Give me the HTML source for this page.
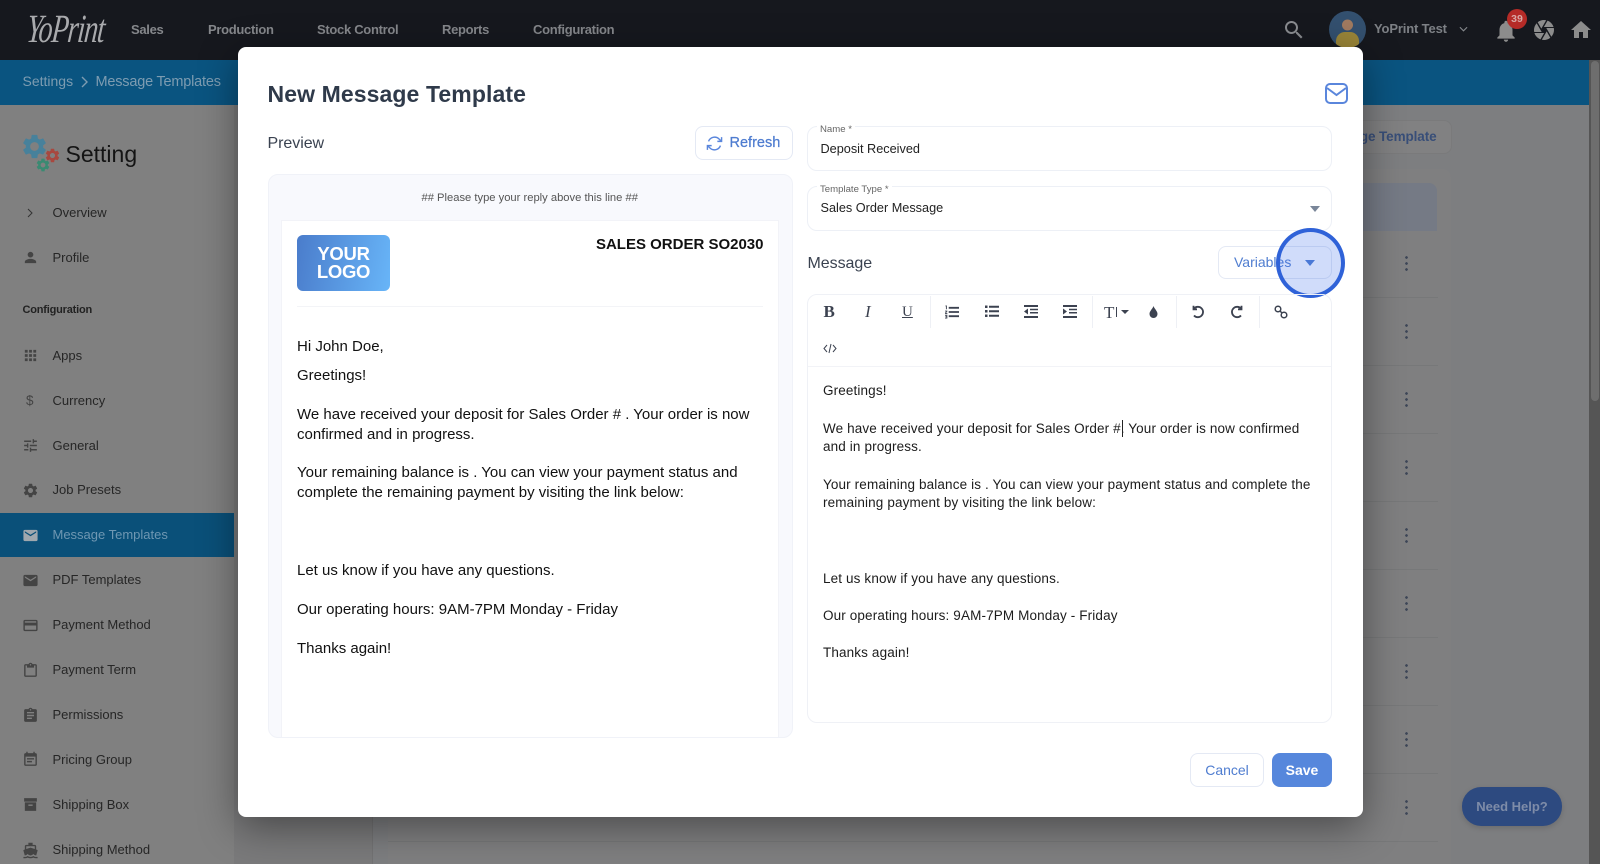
<!DOCTYPE html>
<html><head><meta charset="utf-8"><title>New Message Template</title>
<style>
html,body{margin:0;padding:0;width:1600px;height:864px;overflow:hidden;background:#7d7e80;font-family:"Liberation Sans",sans-serif}
.a{position:absolute}
.t{position:absolute;white-space:nowrap;line-height:20px}
.side{font-size:13px;color:#262626;left:52.5px;margin-top:1px}
.ico{position:absolute;left:21.5px;width:17px;height:17px;fill:#444;margin-top:1px}
.nav{font-size:13px;color:#85878b;font-weight:bold;top:20px;letter-spacing:-.3px}
.pv{font-size:15px;color:#111;left:297px;margin-top:1px}
.ed{font-size:13.5px;color:#1c1c1c;left:823px;letter-spacing:.13px}
.dot{position:absolute;left:1404.5px;width:3px;height:15px;background:radial-gradient(circle at 1.5px 1.5px,#3d4657 1.2px,transparent 1.5px) 0 0/3px 6px}
.sep{position:absolute;left:388px;width:1050px;height:1px;background:#777879}
.vs{position:absolute;top:296px;height:32px;width:1px;background:#eef0f5}
.tb{position:absolute;fill:#3c4250}
</style></head><body>

<!-- background page -->
<div class="a" style="left:0;top:0;width:1600px;height:60px;background:#16181e"></div>
<div class="a" style="left:0;top:60px;width:1589px;height:45px;background:#0a5480"></div>
<div class="a" style="left:0;top:105px;width:234px;height:759px;background:#808080"></div>
<div class="a" style="left:234px;top:105px;width:138px;height:759px;background:#7a7a7b"></div>
<div class="a" style="left:372px;top:105px;width:1px;height:759px;background:#737374"></div>
<div class="a" style="left:388px;top:169px;width:1063px;height:695px;background:#7f7f80;border-radius:8px 8px 0 0"></div>
<div class="a" style="left:1589px;top:60px;width:11px;height:804px;background:#555"></div>
<div class="a" style="left:1591px;top:61px;width:8px;height:340px;background:#6e6e6e;border-radius:4px"></div>

<!-- logo -->
<div class="t" style="left:27px;top:9px;font:italic 40px/40px 'Liberation Serif',serif;color:#a9aaad;letter-spacing:-1.5px;transform:scaleX(.7) skewX(-8deg);transform-origin:left">YoPrint</div>

<div class="t nav" style="left:131px">Sales</div>
<div class="t nav" style="left:208px">Production</div>
<div class="t nav" style="left:317px">Stock Control</div>
<div class="t nav" style="left:442px">Reports</div>
<div class="t nav" style="left:533px">Configuration</div>

<svg class="a" style="left:1282px;top:18px" width="24" height="24" viewBox="0 0 24 24" fill="#8a8c90"><path d="M15.5 14h-.79l-.28-.27C15.41 12.59 16 11.11 16 9.5 16 5.91 13.09 3 9.5 3S3 5.91 3 9.5 5.91 16 9.5 16c1.61 0 3.09-.59 4.23-1.57l.27.28v.79l5 4.99L20.49 19l-4.99-5zm-6 0C7.01 14 5 11.99 5 9.5S7.01 5 9.5 5 14 7.01 14 9.5 11.99 14 9.5 14z"/></svg>
<svg class="a" style="left:1329px;top:11px" width="37" height="37" viewBox="0 0 37 37"><defs><clipPath id="c"><circle cx="18.5" cy="18.5" r="18.5"/></clipPath></defs><circle cx="18.5" cy="18.5" r="18.5" fill="#33506f"/><g clip-path="url(#c)"><circle cx="18.5" cy="14" r="5.5" fill="#a07a60"/><rect x="7" y="21" width="23" height="20" rx="9" fill="#9a8538"/></g></svg>
<div class="t" style="left:1374px;top:19px;font-size:13px;font-weight:bold;color:#7d8085;letter-spacing:-.15px">YoPrint Test</div>
<svg class="a" style="left:1459px;top:25px" width="9" height="8" viewBox="0 0 10 8"><path d="M1 2l4 4 4-4" fill="none" stroke="#85888c" stroke-width="1.2"/></svg>
<svg class="a" style="left:1493px;top:18px" width="26" height="26" viewBox="0 0 24 24" fill="#8c8c8c"><path d="M12 22c1.1 0 2-.9 2-2h-4c0 1.1.89 2 2 2zm6-6v-5c0-3.07-1.64-5.64-4.5-6.32V4c0-.83-.67-1.5-1.5-1.5s-1.5.67-1.5 1.5v.68C7.63 5.36 6 7.92 6 11v5l-2 2v1h16v-1l-2-2z"/></svg>
<div class="a" style="left:1507px;top:9px;width:20px;height:20px;border-radius:50%;background:#b52b27;color:#d9a8a5;font-size:10.5px;font-weight:bold;line-height:20px;text-align:center">39</div>
<svg class="a" style="left:1532px;top:18px" width="24" height="24" viewBox="0 0 24 24" fill="#8c8c8c"><path d="M9.4 10.5l4.77-8.26C13.47 2.09 12.75 2 12 2c-2.4 0-4.6.85-6.32 2.25l3.66 6.35.06-.1zM21.54 9c-.92-2.92-3.15-5.26-6-6.34L11.88 9h9.66zm.26 1h-7.49l.29.5 4.76 8.25C21 16.97 22 14.61 22 12c0-.69-.07-1.35-.2-2zM8.54 12l-3.9-6.75C3.01 7.03 2 9.39 2 12c0 .69.07 1.35.2 2h7.49l-1.15-2zm-6.08 3c.92 2.92 3.15 5.26 6 6.34L12.12 15H2.46zm11.27 0l-3.9 6.76c.7.15 1.42.24 2.17.24 2.4 0 4.6-.85 6.32-2.25l-3.66-6.35-.93 1.6z"/></svg>
<svg class="a" style="left:1569px;top:18px" width="24" height="24" viewBox="0 0 24 24" fill="#8c8c8c"><path d="M10 20v-6h4v6h5v-8h3L12 3 2 12h3v8z"/></svg>

<div class="t" style="left:22.5px;top:71px;font-size:14px;color:#7d9cb1">Settings</div>
<svg class="a" style="left:80px;top:76px" width="9" height="12" viewBox="0 0 9 12"><path d="M2 1l5 5-5 5" fill="none" stroke="#7d9cb1" stroke-width="1.4"/></svg>
<div class="t" style="left:95.5px;top:71.5px;font-size:14.5px;color:#7d9cb1;letter-spacing:-.2px">Message Templates</div>

<!-- setting heading -->
<svg class="a" style="left:20px;top:132px" width="29" height="29" viewBox="0 0 24 24" fill="#47819b"><path d="M19.14 12.94c.04-.3.06-.61.06-.94 0-.32-.02-.64-.07-.94l2.03-1.58c.18-.14.23-.41.12-.61l-1.92-3.32c-.12-.22-.37-.29-.59-.22l-2.39.96c-.5-.38-1.03-.7-1.62-.94l-.36-2.54c-.04-.24-.24-.41-.48-.41h-3.84c-.24 0-.43.17-.47.41l-.36 2.54c-.59.24-1.13.57-1.62.94l-2.39-.96c-.22-.08-.47 0-.59.22L2.74 8.87c-.12.21-.08.47.12.61l2.03 1.58c-.05.3-.09.63-.09.94s.02.64.07.94l-2.03 1.58c-.18.14-.23.41-.12.61l1.92 3.32c.12.22.37.29.59.22l2.39-.96c.5.38 1.03.7 1.62.94l.36 2.54c.05.24.24.41.48.41h3.84c.24 0 .44-.17.47-.41l.36-2.54c.59-.24 1.13-.56 1.62-.94l2.39.96c.22.08.47 0 .59-.22l1.92-3.32c.12-.22.07-.47-.12-.61l-2.01-1.58zM12 15.6c-1.98 0-3.6-1.62-3.6-3.6s1.62-3.6 3.6-3.6 3.6 1.62 3.6 3.6-1.62 3.6-3.6 3.6z"/></svg>
<svg class="a" style="left:43.5px;top:146.5px" width="17" height="17" viewBox="0 0 24 24" fill="#a8483f"><path d="M19.14 12.94c.04-.3.06-.61.06-.94 0-.32-.02-.64-.07-.94l2.03-1.58c.18-.14.23-.41.12-.61l-1.92-3.32c-.12-.22-.37-.29-.59-.22l-2.39.96c-.5-.38-1.03-.7-1.62-.94l-.36-2.54c-.04-.24-.24-.41-.48-.41h-3.84c-.24 0-.43.17-.47.41l-.36 2.54c-.59.24-1.13.57-1.62.94l-2.39-.96c-.22-.08-.47 0-.59.22L2.74 8.87c-.12.21-.08.47.12.61l2.03 1.58c-.05.3-.09.63-.09.94s.02.64.07.94l-2.03 1.58c-.18.14-.23.41-.12.61l1.92 3.32c.12.22.37.29.59.22l2.39-.96c.5.38 1.03.7 1.62.94l.36 2.54c.05.24.24.41.48.41h3.84c.24 0 .44-.17.47-.41l.36-2.54c.59-.24 1.13-.56 1.62-.94l2.39.96c.22.08.47 0 .59-.22l1.92-3.32c.12-.22.07-.47-.12-.61l-2.01-1.58zM12 15.6c-1.98 0-3.6-1.62-3.6-3.6s1.62-3.6 3.6-3.6 3.6 1.62 3.6 3.6-1.62 3.6-3.6 3.6z"/></svg>
<svg class="a" style="left:34.500px;top:157px" width="16" height="16" viewBox="0 0 24 24" fill="#3a8a72"><path d="M19.14 12.94c.04-.3.06-.61.06-.94 0-.32-.02-.64-.07-.94l2.03-1.58c.18-.14.23-.41.12-.61l-1.92-3.32c-.12-.22-.37-.29-.59-.22l-2.39.96c-.5-.38-1.03-.7-1.62-.94l-.36-2.54c-.04-.24-.24-.41-.48-.41h-3.84c-.24 0-.43.17-.47.41l-.36 2.54c-.59.24-1.13.57-1.62.94l-2.39-.96c-.22-.08-.47 0-.59.22L2.74 8.87c-.12.21-.08.47.12.61l2.03 1.58c-.05.3-.09.63-.09.94s.02.64.07.94l-2.03 1.58c-.18.14-.23.41-.12.61l1.92 3.32c.12.22.37.29.59.22l2.39-.96c.5.38 1.03.7 1.62.94l.36 2.54c.05.24.24.41.48.41h3.84c.24 0 .44-.17.47-.41l.36-2.54c.59-.24 1.13-.56 1.62-.94l2.39.96c.22.08.47 0 .59-.22l1.92-3.32c.12-.22.07-.47-.12-.61l-2.01-1.58zM12 15.6c-1.98 0-3.6-1.62-3.6-3.6s1.62-3.6 3.6-3.6 3.6 1.62 3.6 3.6-1.62 3.6-3.6 3.6z"/></svg>
<div class="t" style="left:65.5px;top:144px;font-size:23px;color:#141414">Setting</div>

<!-- sidebar -->
<svg class="a" style="left:26px;top:208px" width="8" height="10" viewBox="0 0 8 10"><path d="M2 1l4 4-4 4" fill="none" stroke="#333" stroke-width="1"/></svg>
<div class="t side" style="top:202px">Overview</div>
<svg class="ico" style="top:248px" viewBox="0 0 24 24"><path d="M12 12c2.21 0 4-1.79 4-4s-1.79-4-4-4-4 1.79-4 4 1.79 4 4 4zm0 2c-2.67 0-8 1.34-8 4v2h16v-2c0-2.66-5.33-4-8-4z"/></svg>
<div class="t side" style="top:247px">Profile</div>
<div class="t" style="left:22.5px;top:300px;font-size:11px;font-weight:bold;color:#222;letter-spacing:-.2px">Configuration</div>

<svg class="ico" style="top:346px" viewBox="0 0 24 24"><path d="M4 8h4V4H4v4zm6 12h4v-4h-4v4zm-6 0h4v-4H4v4zm0-6h4v-4H4v4zm6 0h4v-4h-4v4zm6-10v4h4V4h-4zm-6 4h4V4h-4v4zm6 6h4v-4h-4v4zm0 6h4v-4h-4v4z"/></svg>
<div class="t side" style="top:344.5px">Apps</div>
<div class="t" style="left:26px;top:390.5px;font-size:13.5px;color:#444">$</div>
<div class="t side" style="top:389.5px">Currency</div>
<svg class="ico" style="top:436px" viewBox="0 0 24 24"><path d="M3 17v2h6v-2H3zM3 5v2h10V5H3zm10 16v-2h8v-2h-8v-2h-2v6h2zM7 9v2H3v2h4v2h2V9H7zm14 4v-2H11v2h10zm-6-4h2V7h4V5h-4V3h-2v6z"/></svg>
<div class="t side" style="top:434.5px">General</div>
<svg class="ico" style="top:481px" viewBox="0 0 24 24"><path d="M19.14 12.94c.04-.3.06-.61.06-.94 0-.32-.02-.64-.07-.94l2.03-1.58c.18-.14.23-.41.12-.61l-1.92-3.32c-.12-.22-.37-.29-.59-.22l-2.39.96c-.5-.38-1.03-.7-1.62-.94l-.36-2.54c-.04-.24-.24-.41-.48-.41h-3.84c-.24 0-.43.17-.47.41l-.36 2.54c-.59.24-1.13.57-1.62.94l-2.39-.96c-.22-.08-.47 0-.59.22L2.74 8.87c-.12.21-.08.47.12.61l2.03 1.58c-.05.3-.09.63-.09.94s.02.64.07.94l-2.03 1.58c-.18.14-.23.41-.12.61l1.92 3.32c.12.22.37.29.59.22l2.39-.96c.5.38 1.03.7 1.62.94l.36 2.54c.05.24.24.41.48.41h3.84c.24 0 .44-.17.47-.41l.36-2.54c.59-.24 1.13-.56 1.62-.94l2.39.96c.22.08.47 0 .59-.22l1.92-3.32c.12-.22.07-.47-.12-.61l-2.01-1.58zM12 15.6c-1.98 0-3.6-1.62-3.6-3.6s1.62-3.6 3.6-3.6 3.6 1.62 3.6 3.6-1.62 3.6-3.6 3.6z"/></svg>
<div class="t side" style="top:479px">Job Presets</div>
<div class="a" style="left:0;top:513px;width:234px;height:44px;background:#0a5079"></div>
<svg class="ico" style="top:526px;fill:#a0a8ae" viewBox="0 0 24 24"><path d="M20 4H4c-1.1 0-1.99.9-1.99 2L2 18c0 1.1.9 2 2 2h16c1.1 0 2-.9 2-2V6c0-1.1-.9-2-2-2zm0 4l-8 5-8-5V6l8 5 8-5v2z"/></svg>
<div class="t side" style="top:524px;color:#6f97b2">Message Templates</div>
<svg class="ico" style="top:571px" viewBox="0 0 24 24"><path d="M20 4H4c-1.1 0-1.99.9-1.99 2L2 18c0 1.1.9 2 2 2h16c1.1 0 2-.9 2-2V6c0-1.1-.9-2-2-2zm0 4l-8 5-8-5V6l8 5 8-5v2z"/></svg>
<div class="t side" style="top:569px">PDF Templates</div>
<svg class="ico" style="top:616px" viewBox="0 0 24 24"><path d="M20 4H4c-1.11 0-1.99.89-1.99 2L2 18c0 1.11.89 2 2 2h16c1.11 0 2-.89 2-2V6c0-1.11-.89-2-2-2zm0 14H4v-6h16v6zm0-10H4V6h16v2z"/></svg>
<div class="t side" style="top:613.5px">Payment Method</div>
<svg class="ico" style="top:661px" viewBox="0 0 24 24"><path d="M19 3h-4.18C14.4 1.84 13.3 1 12 1c-1.3 0-2.4.84-2.82 2H5c-1.1 0-2 .9-2 2v14c0 1.1.9 2 2 2h14c1.1 0 2-.9 2-2V5c0-1.1-.9-2-2-2zm-7 0c.55 0 1 .45 1 1s-.45 1-1 1-1-.45-1-1 .45-1 1-1zm7 16H5V5h2v3h10V5h2v14z"/></svg>
<div class="t side" style="top:658.5px">Payment Term</div>
<svg class="ico" style="top:706px" viewBox="0 0 24 24"><path d="M19 3h-4.18C14.4 1.84 13.3 1 12 1c-1.3 0-2.4.84-2.82 2H5c-1.1 0-2 .9-2 2v14c0 1.1.9 2 2 2h14c1.1 0 2-.9 2-2V5c0-1.1-.9-2-2-2zm-7 0c.55 0 1 .45 1 1s-.45 1-1 1-1-.45-1-1 .45-1 1-1zm2 14H7v-2h7v2zm3-4H7v-2h10v2zm0-4H7V7h10v2z"/></svg>
<div class="t side" style="top:703.5px">Permissions</div>
<svg class="ico" style="top:750px" viewBox="0 0 24 24"><path d="M17 10H7v2h10v-2zm2-7h-1V1h-2v2H8V1H6v2H5c-1.11 0-1.99.9-1.99 2L3 19c0 1.1.89 2 2 2h14c1.1 0 2-.9 2-2V5c0-1.1-.9-2-2-2zm0 16H5V8h14v11zm-5-5H7v2h7v-2z"/></svg>
<div class="t side" style="top:749px">Pricing Group</div>
<svg class="ico" style="top:795px" viewBox="0 0 24 24"><path fill-rule="evenodd" d="M3 3h18v5H3zM4 9h16v12H4zM9 12v2h6v-2z"/></svg>
<div class="t side" style="top:793.5px">Shipping Box</div>
<svg class="ico" style="top:841px" viewBox="0 0 24 24"><path d="M20 21c-1.39 0-2.78-.47-4-1.32-2.44 1.71-5.56 1.71-8 0C6.78 20.53 5.39 21 4 21H2v2h2c1.38 0 2.74-.35 4-.99 2.52 1.29 5.48 1.29 8 0 1.26.65 2.62.99 4 .99h2v-2h-2zM3.95 19H4c1.6 0 3.02-.88 4-2 .98 1.12 2.4 2 4 2s3.02-.88 4-2c.98 1.12 2.4 2 4 2h.05l1.89-6.68c.08-.26.06-.54-.06-.78s-.34-.42-.6-.5L20 10.62V6c0-1.1-.9-2-2-2h-3V1H9v3H6c-1.1 0-2 .9-2 2v4.62l-1.29.42c-.26.08-.48.26-.6.5s-.15.52-.06.78L3.95 19zM6 6h12v3.97L12 8 6 9.97V6z"/></svg>
<div class="t side" style="top:839px">Shipping Method</div>

<!-- right background content -->
<div class="a" style="left:1300px;top:120px;width:150px;height:32px;background:#818182;border:1px solid #7a7a7b;border-radius:8px"></div>
<div class="t" style="right:163.5px;top:126.5px;font-size:13.5px;font-weight:bold;color:#384e78;letter-spacing:-.1px">Message Template</div>
<div class="a" style="left:400px;top:183px;width:1037px;height:48px;background:#757a85;border-radius:8px 8px 0 0"></div>
<div class="sep" style="top:297px"></div><div class="sep" style="top:365px"></div><div class="sep" style="top:433px"></div><div class="sep" style="top:501px"></div><div class="sep" style="top:569px"></div><div class="sep" style="top:637px"></div><div class="sep" style="top:705px"></div><div class="sep" style="top:773px"></div><div class="sep" style="top:841px"></div>
<div class="dot" style="top:256px"></div><div class="dot" style="top:324px"></div><div class="dot" style="top:392px"></div><div class="dot" style="top:460px"></div><div class="dot" style="top:528px"></div><div class="dot" style="top:596px"></div><div class="dot" style="top:664px"></div><div class="dot" style="top:732px"></div><div class="dot" style="top:800px"></div>

<div class="a" style="left:1462px;top:787px;width:100px;height:39px;border-radius:19px;background:#2d4a80;color:#7e8ca8;font-size:13px;font-weight:bold;line-height:39px;text-align:center;box-shadow:0 2px 6px rgba(0,0,0,.15)">Need Help?</div>

<!-- modal -->
<div class="a" style="left:238px;top:47px;width:1125px;height:770px;background:#fff;border-radius:8px;box-shadow:0 10px 40px rgba(0,0,0,.42)"></div>

<div class="t" style="left:267.5px;top:83.5px;font-size:23px;font-weight:bold;color:#2f3a4a;letter-spacing:.1px">New Message Template</div>
<svg class="a" style="left:1325px;top:83px" width="23" height="21" viewBox="0 0 23 21"><rect x="1" y="1" width="21" height="19" rx="4" fill="none" stroke="#5a86dc" stroke-width="2"/><path d="M2 5l9.5 7L21 5" fill="none" stroke="#5a86dc" stroke-width="2"/></svg>

<div class="t" style="left:267.5px;top:134px;font-size:16px;color:#3a4250;letter-spacing:-.05px">Preview</div>
<div class="a" style="left:695px;top:126px;width:96px;height:32px;border:1px solid #e4e9f4;border-radius:8px;background:#fff"></div>
<svg class="a" style="left:706px;top:135px" width="17" height="17" viewBox="0 0 24 24" fill="none" stroke="#5a86dc" stroke-width="2"><path d="M22 3v6h-6M2 21v-6h6"/><path d="M3.6 9A9 9 0 0 1 18.4 5.600L22 9M2 15l3.6 3.400A9 9 0 0 0 20.400 15"/></svg>
<div class="t" style="left:729.5px;top:132.5px;font-size:14.5px;color:#4f7dd0;-webkit-text-stroke:.25px #4f7dd0">Refresh</div>

<div class="a" style="left:268px;top:174px;width:525px;height:564px;box-sizing:border-box;background:#f8f9fd;border:1px solid #f0f2f8;border-radius:10px"></div>
<div class="t" style="left:421.5px;top:188px;font-size:11.2px;color:#555">## Please type your reply above this line ##</div>
<div class="a" style="left:281px;top:220px;width:498px;height:517px;background:#fff;border:1px solid #f2f3f8;border-bottom:0;box-sizing:border-box"></div>
<div class="a" style="left:297px;top:235px;width:93px;height:56px;border-radius:6px;background:linear-gradient(100deg,#4a7ccb,#68b5f8);color:#fff;font-size:18.5px;font-weight:bold;line-height:18px;text-align:center;padding-top:9.5px;box-sizing:border-box;letter-spacing:-.3px">YOUR<br>LOGO</div>
<div class="t" style="right:836.5px;top:234.5px;font-size:15px;font-weight:bold;color:#111">SALES ORDER SO2030</div>
<div class="a" style="left:297px;top:306px;width:466px;height:1px;background:#f3f4f7"></div>

<div class="t pv" style="top:336px">Hi John Doe,</div>
<div class="t pv" style="top:364.5px">Greetings!</div>
<div class="t pv" style="top:403.5px">We have received your deposit for Sales Order # . Your order is now</div>
<div class="t pv" style="top:423.5px">confirmed and in progress.</div>
<div class="t pv" style="top:462px">Your remaining balance is . You can view your payment status and</div>
<div class="t pv" style="top:482px">complete the remaining payment by visiting the link below:</div>
<div class="t pv" style="top:559.5px">Let us know if you have any questions.</div>
<div class="t pv" style="top:598.5px">Our operating hours: 9AM-7PM Monday - Friday</div>
<div class="t pv" style="top:637.5px">Thanks again!</div>

<!-- right form -->
<div class="a" style="left:807px;top:126px;width:525px;height:45px;box-sizing:border-box;border:1px solid #edf0f6;border-radius:10px"></div>
<div class="t" style="left:817px;top:125px;height:10px;line-height:10px;padding:0 3px;background:#fff;font-size:9.6px;color:#666">Name *</div>
<div class="t" style="left:820.5px;top:138.5px;font-size:12.7px;color:#222">Deposit Received</div>
<div class="a" style="left:807px;top:186px;width:525px;height:45px;box-sizing:border-box;border:1px solid #edf0f6;border-radius:10px"></div>
<div class="t" style="left:817px;top:185px;height:10px;line-height:10px;padding:0 3px;background:#fff;font-size:9.6px;color:#666">Template Type *</div>
<div class="t" style="left:820.5px;top:197.5px;font-size:12.7px;color:#222">Sales Order Message</div>
<svg class="a" style="left:1310px;top:206px" width="10" height="6" viewBox="0 0 10 6"><path d="M0 0h10L5 6z" fill="#7a8699"/></svg>

<div class="t" style="left:807.5px;top:253.500px;font-size:16px;color:#3a4250;letter-spacing:-.05px">Message</div>
<div class="a" style="left:1218px;top:246px;width:114px;height:33px;box-sizing:border-box;border:1px solid #e4e9f4;border-radius:8px"></div>
<div class="t" style="left:1234px;top:252px;font-size:14px;color:#4f7dd0">Variables</div>
<svg class="a" style="left:1305px;top:260px" width="10" height="6" viewBox="0 0 10 6"><path d="M0 0h10L5 6z" fill="#4f7dd0"/></svg>
<div class="a" style="left:1276px;top:228px;width:69px;height:70px;box-sizing:border-box;border:4px solid #2f62d8;border-radius:50%;background:rgba(60,110,235,.24)"></div>

<!-- editor -->
<div class="a" style="left:807px;top:294px;width:525px;height:429px;box-sizing:border-box;border:1px solid #eff1f6;border-radius:10px"></div>
<div class="a" style="left:808px;top:366px;width:523px;height:1px;background:#f2f3f7"></div>
<div class="vs" style="left:930px"></div><div class="vs" style="left:1092px"></div><div class="vs" style="left:1176px"></div><div class="vs" style="left:1259px"></div>
<div class="t" style="left:823.5px;top:302px;font:bold 17px/20px 'Liberation Serif',serif;color:#3c4250">B</div>
<div class="t" style="left:865px;top:302px;font:italic 17px/20px 'Liberation Serif',serif;color:#3c4250">I</div>
<div class="t" style="left:902px;top:301.500px;font:15px/20px 'Liberation Serif',serif;color:#3c4250;text-decoration:underline">U</div>
<svg class="tb" style="left:945px;top:305px" width="14" height="14" viewBox="0 0 15 14"><path d="M4 1.500h11v2H4zM4 6h11v2H4zM4 10.500h11v2H4zM.5 0h1.500v4H1V1H.5zM0 5.500h2.500v1L1 8h1.500v1H0V8l1.500-1.500H0zM0 10h2.500v4H0v-1h1.500v-.5H.5v-1h1v-.5H0z"/></svg>
<svg class="tb" style="left:985px;top:305px" width="14" height="13" viewBox="0 0 14 13"><path d="M0 .5h2.500V3H0zM4 .7h10v2H4zM0 5h2.500v2.500H0zM4 5.200h10v2H4zM0 9.500h2.500V12H0zM4 9.700h10v2H4z"/></svg>
<svg class="tb" style="left:1024px;top:305px" width="14" height="13" viewBox="0 0 14 13"><path d="M0 0h14v2H0zM6 3.700h8v1.500H6zM6 7h8v1.500H6zM0 11h14v2H0zM4 3.500v6L0 6.500z"/></svg>
<svg class="tb" style="left:1063px;top:305px" width="14" height="13" viewBox="0 0 14 13"><path d="M0 0h14v2H0zM6 3.700h8v1.500H6zM6 7h8v1.500H6zM0 11h14v2H0zM0 3.500v6l4-3z"/></svg>
<div class="t" style="left:1104px;top:302.500px;font:17px/20px 'Liberation Serif',serif;color:#3c4250">T</div>
<div class="a" style="left:1115.500px;top:307px;width:1px;height:10px;background:#3c4250"></div>
<svg class="tb" style="left:1121px;top:310px" width="8" height="4" viewBox="0 0 8 4"><path d="M0 0h8L4 4z"/></svg>
<svg class="tb" style="left:1149px;top:306px" width="9" height="12" viewBox="0 0 9 12"><path d="M4.500 0C3.500 3 .5 5 .5 8a4 4 0 0 0 8 0c0-3-3-5-4-8z"/></svg>
<svg class="a" style="left:1191px;top:305px" width="14" height="14" viewBox="0 0 14 14" fill="none" stroke="#3c4250" stroke-width="1.800"><path d="M3 3.500A5.200 5.200 0 1 1 3 10.500"/><path d="M2.500.8v3.500H6"/></svg>
<svg class="a" style="left:1230px;top:305px" width="14" height="14" viewBox="0 0 14 14" fill="none" stroke="#3c4250" stroke-width="1.800"><path d="M11 3.500A5.200 5.200 0 1 0 11 10.500"/><path d="M11.500.8v3.500H8"/></svg>
<svg class="a" style="left:1274px;top:305px" width="14" height="14" viewBox="0 0 14 14" fill="none" stroke="#3c4250" stroke-width="1.500"><circle cx="4" cy="4" r="2.800"/><circle cx="10" cy="10" r="2.800"/><path d="M6 6l2 2"/></svg>
<svg class="a" style="left:823px;top:343px" width="14" height="11" viewBox="0 0 14 11" fill="none" stroke="#3c4250" stroke-width="1"><path d="M4 2L1 5.500 4 9M10 2l3 3.500L10 9M8 1L6 10"/></svg>

<div class="t ed" style="top:381px">Greetings!</div>
<div class="t ed" style="top:418.500px">We have received your deposit for Sales Order #. Your order is now confirmed</div>
<div class="a" style="left:1122px;top:420px;width:1px;height:17px;background:#222"></div>
<div class="t ed" style="top:437px">and in progress.</div>
<div class="t ed" style="top:474.500px">Your remaining balance is . You can view your payment status and complete the</div>
<div class="t ed" style="top:493px">remaining payment by visiting the link below:</div>
<div class="t ed" style="top:568.500px">Let us know if you have any questions.</div>
<div class="t ed" style="top:606px">Our operating hours: 9AM-7PM Monday - Friday</div>
<div class="t ed" style="top:643px">Thanks again!</div>

<div class="a" style="left:1190px;top:753px;width:74px;height:34px;box-sizing:border-box;border:1px solid #e4e9f4;border-radius:8px;color:#4f7dd0;font-size:14px;line-height:32px;text-align:center">Cancel</div>
<div class="a" style="left:1272px;top:753px;width:60px;height:34px;background:#5687dc;border-radius:8px;color:#fff;font-size:14px;font-weight:bold;line-height:34px;text-align:center">Save</div>

</body></html>
